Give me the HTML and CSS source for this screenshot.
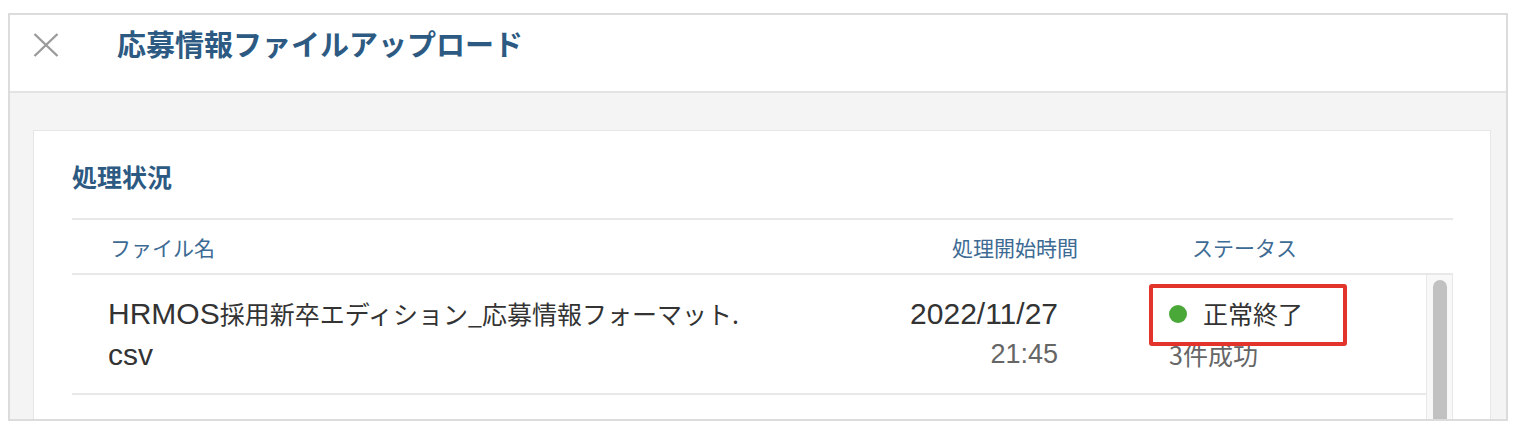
FILE: index.html
```html
<!DOCTYPE html>
<html lang="ja">
<head>
<meta charset="utf-8">
<title>応募情報ファイルアップロード</title>
<link rel="stylesheet" href="styles.css">
</head>
<body>
<div class="modal">
  <header class="modal-header">
    <button class="close" aria-label="閉じる">
      <svg width="26" height="24" viewBox="0 0 26 24"><path d="M1.5 1 L24.5 23 M24.5 1 L1.5 23" stroke="#9b9b9b" stroke-width="2.4" fill="none"/></svg>
    </button>
    <h1 class="modal-title">応募情報ファイルアップロード</h1>
  </header>
  <div class="modal-body">
    <section class="card">
      <h2 class="card-title">処理状況</h2>
      <div class="table">
        <div class="thead">
          <div class="th th-name">ファイル名</div>
          <div class="th th-date">処理開始時間</div>
          <div class="th th-status">ステータス</div>
        </div>
        <div class="tbody">
          <div class="rows">
            <div class="row">
              <div class="cell-name"><span class="en">HRMOS</span>採用新卒エディション_応募情報フォーマット.<br><span class="en">csv</span></div>
              <div class="cell-date">
                <div class="date">2022/11/27</div>
                <div class="time">21:45</div>
              </div>
              <div class="cell-status">
                <div class="status-main highlight"><span class="dot"></span>正常終了</div>
                <div class="status-sub">3件成功</div>
              </div>
            </div>
            <div class="row row-empty"></div>
          </div>
          <div class="scrollbar"><div class="thumb"></div></div>
        </div>
      </div>
    </section>
  </div>
</div>
</body>
</html>
```
FILE: styles.css
```css
* { box-sizing: border-box; }
html, body { margin: 0; padding: 0; background: #fff; }
body {
  font-family: "Noto Sans CJK JP", "Noto Sans", sans-serif;
  color: #333;
}
.modal {
  margin: 13px 0 0 8px;
  width: 1500px;
  height: 408px;
  border: 2px solid #dcdcdc;
  overflow: hidden;
  display: flex;
  flex-direction: column;
  background: #fff;
}
.modal-header {
  height: 78px;
  flex: none;
  display: flex;
  align-items: flex-start;
  padding: 8px 0 0 23px;
  border-bottom: 2px solid #e3e3e3;
}
.close {
  margin-top: 10px;
  width: 26px;
  height: 24px;
  padding: 0;
  border: 0;
  background: none;
  display: block;
}
.close svg { display: block; }
.modal-title {
  margin: 0 0 0 58px;
  font-size: 29px;
  line-height: 40px;
  font-weight: 700;
  color: #2c5a82;
}
.modal-body {
  flex: 1;
  background: #f4f4f4;
  padding: 37px 15px 0 23px;
}
.card {
  background: #fff;
  border: 1px solid #e6e6e6;
  padding: 28px 37px 0 38px;
  height: 400px;
}
.card-title {
  margin: 0 0 25px;
  font-size: 25px;
  line-height: 34px;
  font-weight: 700;
  color: #2c5a82;
}
.thead {
  display: grid;
  grid-template-columns: 1fr auto 261px;
  align-items: center;
  height: 57px;
  border-top: 2px solid #e8e8e8;
  border-bottom: 2px solid #e8e8e8;
  font-size: 21px;
  line-height: 30px;
  color: #3d6b94;
}
.th-name { padding-left: 38px; }
.th-date { text-align: right; padding-right: 114px; }
.tbody {
  display: flex;
  height: 260px;
}
.rows { flex: 1; }
.row {
  display: grid;
  grid-template-columns: 1fr auto 257px;
  padding: 18px 0 18px 36px;
  border-bottom: 2px solid #e8e8e8;
  font-size: 25px;
  line-height: 41px;
  color: #333;
}
.row-empty { height: 80px; border-bottom: 0; }
.en {
  font-family: "Liberation Sans", Arial, sans-serif;
  font-size: 30px;
}
.cell-date {
  text-align: right;
  padding-right: 111px;
}
.date {
  font-family: "Liberation Sans", Arial, sans-serif;
  font-size: 30px;
  color: #333;
}
.time {
  font-family: "Liberation Sans", Arial, sans-serif;
  font-size: 27px;
  color: #666;
}
.status-main {
  position: relative;
  display: flex;
  align-items: center;
  gap: 16px;
  height: 41px;
}
.highlight::after {
  content: "";
  position: absolute;
  left: -20px;
  top: -9px;
  width: 190px;
  height: 54px;
  border: 4px solid #e3342b;
  border-radius: 3px;
}
.dot {
  width: 18px;
  height: 18px;
  border-radius: 50%;
  background: #4aa838;
  flex: none;
}
.status-sub { color: #666; }
.scrollbar {
  width: 27px;
  flex: none;
  background: #f8f8f8;
  border-left: 1px solid #e8e8e8;
  border-right: 1px solid #e8e8e8;
  padding: 5px 0 0 6px;
}
.thumb {
  width: 14px;
  height: 220px;
  border-radius: 7px;
  background: #c1c1c1;
}
```
